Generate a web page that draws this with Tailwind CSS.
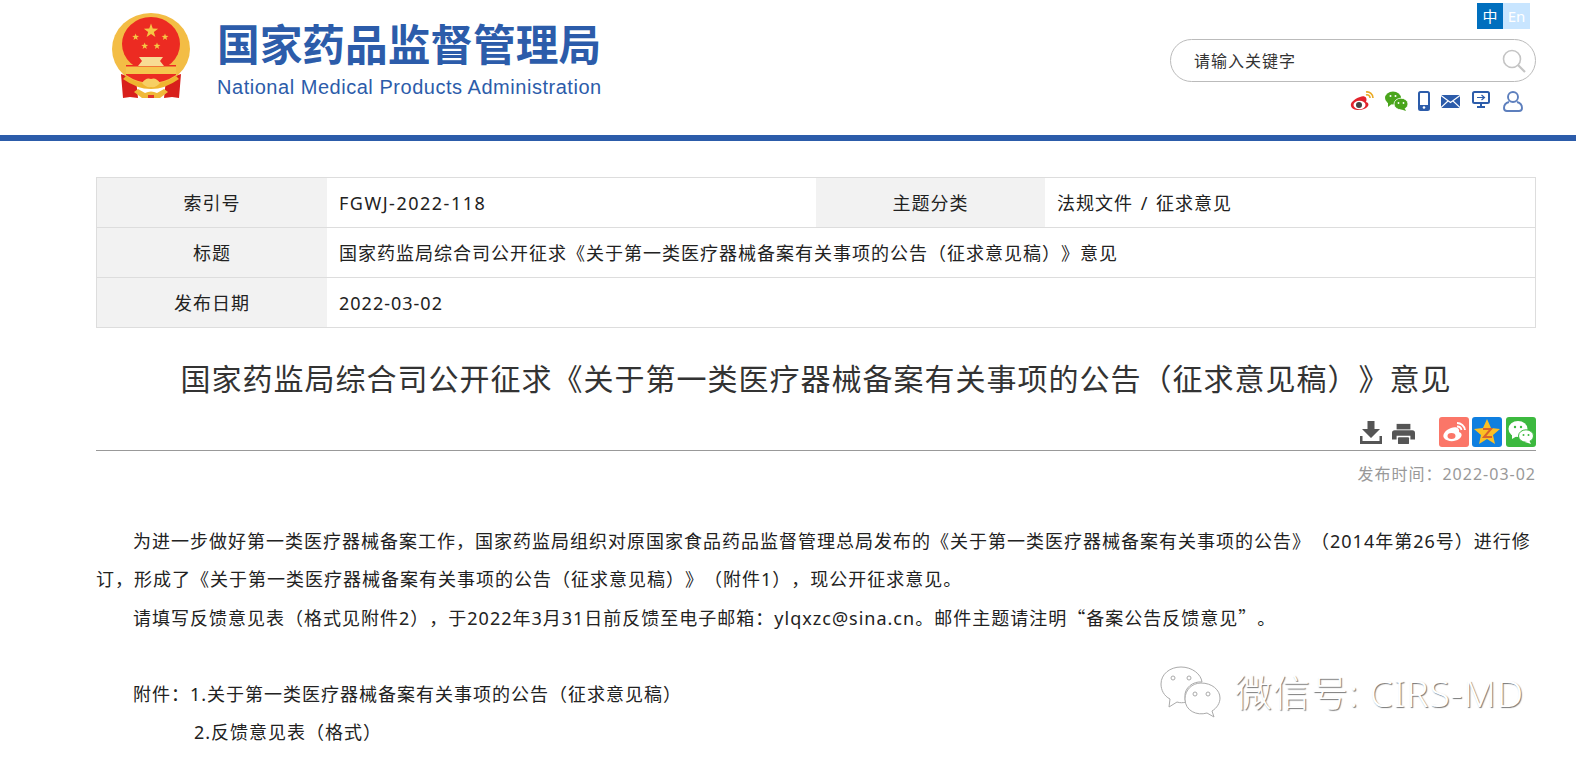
<!DOCTYPE html>
<html lang="zh-CN">
<head>
    <meta charset="UTF-8">
    <meta name="viewport" content="width=device-width, initial-scale=1.0">
    <title>国家药品监督管理局</title>
    <script src="https://cdn.jsdelivr.net/npm/@tailwindcss/browser@4"></script>
</head>
<body class="relative h-[765px] overflow-hidden bg-white font-['Noto_Sans','Noto_Sans_CJK_SC',sans-serif] tracking-[1px] text-[#333] [text-spacing-trim:space-all]">
    <!-- header -->
    <header class="flex h-[135px] justify-between">
        <div class="flex pl-[100px] pt-[5px]">
            <svg class="h-[100px] w-[100px]" viewBox="0 0 100 100">
                <defs>
                    <polygon id="star" points="0,-10 2.35,-3.24 9.51,-3.09 3.8,1.24 5.88,8.09 0,4 -5.88,8.09 -3.8,1.24 -9.51,-3.09 -2.35,-3.24"/>
                </defs>
                <path d="M21 69 L36 74 L38 93 L30 92 L23 93 Z" fill="#d8201c"/>
                <path d="M81 69 L66 74 L64 93 L72 92 L79 93 Z" fill="#d8201c"/>
                <ellipse cx="51" cy="44" rx="39" ry="36" fill="#f3bd45"/>
                <ellipse cx="51" cy="39" rx="29" ry="27" fill="#ec2b22"/>
                <path d="M26 60 H76 V70 Q64 78 51 78 Q38 78 26 70 Z" fill="#ec2b22"/>
                <path d="M42 56 L39 52 H63 L60 56 L64 61 H38 Z" fill="#f8dc94"/>
                <rect x="26" y="61.5" width="50" height="7.5" fill="#f5c64e"/>
                <path d="M26 71 Q38 79 51 79 Q64 79 76 71 L79 74 Q65 84 51 84 Q37 84 23 74 Z" fill="#efb52f"/>
                <path d="M42 78 Q46 72 51 74 Q56 72 60 78 Q56 83 51 82 Q46 83 42 78 Z" fill="#f7cf63"/>
                <path d="M38 84 L45 88 Q51 85 57 88 L64 84 L68 87 L60 93 H42 L34 87 Z" fill="#f0b93a"/>
                <path d="M48 90 H54 V93 H48 Z" fill="#e0342a"/>
                <g fill="#f6c744">
                    <use href="#star" transform="translate(51 26) scale(.75)"/>
                    <use href="#star" transform="translate(35.6 32) scale(.36)"/>
                    <use href="#star" transform="translate(65 32) scale(.36)"/>
                    <use href="#star" transform="translate(44.7 41) scale(.36)"/>
                    <use href="#star" transform="translate(57 41) scale(.36)"/>
                </g>
            </svg>
            <div class="ml-[17px] w-[384px] pt-[17px] tracking-normal text-[#2c5caa]">
                <div class="h-[53px] whitespace-nowrap text-[42.7px] leading-[46px] font-bold">国家药品监督管理局</div>
                <div class="whitespace-nowrap font-['Liberation_Sans',sans-serif] text-[20px] leading-[24px] tracking-[0.53px]">National Medical Products Administration</div>
            </div>
        </div>

        <div class="mr-[40px] w-[366px] pt-[3px]">
            <div class="flex justify-end pr-[6px] text-[15px] leading-[26px] tracking-normal text-white">
                <span class="h-[26px] w-[26px] bg-[#006fbe] text-center">中</span>
                <span class="h-[26px] w-[27px] bg-[#c8e5ff] text-center">En</span>
            </div>
            <div class="mt-[10px] flex h-[43px] items-center justify-between rounded-full border border-[#bbb] pr-[9px] pl-[23px] text-[16px]">
                <span>请输入关键字</span>
                <svg class="h-[24px] w-[24px]" viewBox="0 0 24 24" fill="none" stroke="#c4c4c4">
                    <circle cx="10" cy="10" r="8.5" stroke-width="1.6"/>
                    <path d="M16 16 L23 23" stroke-width="2.2"/>
                </svg>
            </div>
            <div class="mt-[9px] flex items-start justify-end pr-[13px]">
                <svg class="h-[20px] w-[24px]" viewBox="0 0 24 20">
                    <path d="M10 6 C4 8 0 12 1 15 C2 19 9 20 14 18 C19 16 20 12 16 11 C18 6 14 4 10 6 Z" fill="#e2232c"/>
                    <ellipse cx="9.5" cy="14" rx="6" ry="4.2" fill="#fff"/>
                    <circle cx="9" cy="14" r="3" fill="#444"/>
                    <path d="M16 1 A6 6 0 0 1 23 7 M16 4 A3 3 0 0 1 20 7" fill="none" stroke="#e9a921" stroke-width="1.6"/>
                </svg>
                <svg class="ml-[11px] h-[20px] w-[23px]" viewBox="0 0 23 20" fill="#4aa51c">
                    <ellipse cx="8" cy="7" rx="8" ry="6.5"/>
                    <path d="M3 10 L3 16 L8 12 Z"/>
                    <ellipse cx="16" cy="13" rx="7" ry="5.8" stroke="#fff" stroke-width=".8"/>
                    <path d="M19 16 L21 20 L15 18 Z"/>
                    <g fill="#fff"><circle cx="5.5" cy="5" r="1"/><circle cx="10.5" cy="5" r="1"/><circle cx="13.5" cy="12" r=".9"/><circle cx="18.5" cy="12" r=".9"/></g>
                </svg>
                <svg class="ml-[10px] h-[20px] w-[12px]" viewBox="0 0 12 20">
                    <rect x="1" y="1" width="10" height="18" rx="1.5" fill="none" stroke="#2c5caa" stroke-width="2"/>
                    <rect x="1" y="14" width="10" height="5" fill="#2c5caa"/>
                    <circle cx="6" cy="16.5" r="1.3" fill="#fff"/>
                </svg>
                <svg class="mt-[4px] ml-[11px] h-[13px] w-[19px]" viewBox="0 0 19 13">
                    <rect width="19" height="13" rx="1" fill="#2c5caa"/>
                    <path d="M0 .5 L9.5 7.5 L19 .5 M0 12.5 L7 6 M19 12.5 L12 6" fill="none" stroke="#fff" stroke-width="1.1"/>
                </svg>
                <svg class="ml-[12px] h-[18px] w-[18px]" viewBox="0 0 18 18">
                    <rect x="1" y="1" width="16" height="11" rx="1.5" fill="#fff" stroke="#2c5caa" stroke-width="2"/>
                    <path d="M5 6.5 H12 M9.5 4 L12.5 6.5 L9.5 9" fill="none" stroke="#2c5caa" stroke-width="1.2"/>
                    <path d="M8 13 H10 V15 H13 V17 H5 V15 H8 Z" fill="#2c5caa"/>
                </svg>
                <svg class="ml-[13px] h-[21px] w-[20px]" viewBox="0 0 20 21" fill="none" stroke="#5d7fbd" stroke-width="1.9">
                    <circle cx="10" cy="6" r="5"/>
                    <path d="M6 11 C2 12 1 15 1 17 C1 19 2 20 4 20 H16 C18 20 19 19 19 17 C19 15 18 12 14 11"/>
                </svg>
            </div>
        </div>
    </header>
    <div class="h-[6px] bg-[#2c5caa]"></div>

    <main class="ml-[96px] w-[1440px] pt-[36px]">
        <!-- info table -->
        <div class="grid grid-cols-[230px_489px_229px_1fr] border-t border-l border-[#ddd] text-[18px] text-[#222]">
            <div class="flex h-[50px] items-center justify-center border-b border-[#ddd] bg-[#f2f2f2] pt-[2px]">索引号</div>
            <div class="flex h-[50px] items-center border-b border-[#ddd] pt-[2px] pl-[12px] tracking-[1.5px]">FGWJ-2022-118</div>
            <div class="flex h-[50px] items-center justify-center border-b border-[#ddd] bg-[#f2f2f2] pt-[2px]">主题分类</div>
            <div class="flex h-[50px] items-center border-r border-b border-[#ddd] pt-[2px] pl-[12px] [word-spacing:2px]">法规文件 / 征求意见</div>

            <div class="flex h-[50px] items-center justify-center border-b border-[#ddd] bg-[#f2f2f2] pt-[2px]">标题</div>
            <div class="col-span-3 flex h-[50px] items-center border-r border-b border-[#ddd] pt-[2px] pl-[12px]">国家药监局综合司公开征求《关于第一类医疗器械备案有关事项的公告（征求意见稿）》意见</div>

            <div class="flex h-[50px] items-center justify-center border-b border-[#ddd] bg-[#f2f2f2] pt-[2px]">发布日期</div>
            <div class="col-span-3 flex h-[50px] items-center border-r border-b border-[#ddd] pt-[2px] pl-[12px]">2022-03-02</div>
        </div>

        <h1 class="mt-[26px] h-[50px] text-center text-[30px] leading-[50px]">国家药监局综合司公开征求《关于第一类医疗器械备案有关事项的公告（征求意见稿）》意见</h1>

        <!-- share row -->
        <div class="flex h-[47px] items-start justify-end border-b border-[#999] pt-[13px]">
            <svg class="mt-[4px] h-[23px] w-[22px]" viewBox="0 0 22 23" fill="#555">
                <path d="M7.5 0 H14.5 V8 H20 L11 17 L2 8 H7.5 Z"/>
                <path d="M0 15 H2.5 V20 H19.5 V15 H22 V23 H0 Z"/>
            </svg>
            <svg class="mt-[6px] ml-[10px] h-[22px] w-[23px]" viewBox="0 0 25 22" fill="#555">
                <path d="M5 0 H20 V6 H5 Z"/>
                <path d="M3 7 H22 C24 7 25 8 25 10 V17 H20 V13 H5 V17 H0 V10 C0 8 1 7 3 7 Z"/>
                <rect x="6.5" y="14.5" width="12" height="7.5" rx="1"/>
            </svg>
            <svg class="ml-[24px] h-[30px] w-[30px]" viewBox="0 0 30 30">
                <rect width="30" height="30" rx="3" fill="#fb7668"/>
                <path d="M12 11 C6 13 3 18 5 21 C8 25 16 25 20 22 C24 19 23 16 20 15 C21 11 17 9 12 11 Z" fill="#fff"/>
                <ellipse cx="12.5" cy="19" rx="4" ry="3" fill="#fb7668"/>
                <path d="M18 6 A8 8 0 0 1 26 13 M18 9.5 A4.5 4.5 0 0 1 22.5 13" fill="none" stroke="#fff" stroke-width="1.8"/>
            </svg>
            <svg class="ml-[3px] h-[30px] w-[30px]" viewBox="0 0 30 30">
                <rect width="30" height="30" rx="3" fill="#0f7fe0"/>
                <polygon points="15,2 19,11 28,12 21,18 23,27 15,22 7,27 9,18 2,12 11,11" fill="#fbbf24"/>
                <path d="M11 12 H19 L12 20 H20" fill="none" stroke="#d9622b" stroke-width="2"/>
            </svg>
            <svg class="ml-[4px] h-[30px] w-[30px]" viewBox="0 0 30 30">
                <rect width="30" height="30" rx="3" fill="#3cb93f"/>
                <ellipse cx="12" cy="12" rx="9.5" ry="8" fill="#fff"/>
                <path d="M6 17 L6 22 L11 19 Z" fill="#fff"/>
                <ellipse cx="20" cy="19" rx="7.5" ry="6.2" fill="#fff" stroke="#3cb93f"/>
                <path d="M23 23 L25 27 L19 25 Z" fill="#fff"/>
                <g fill="#3cb93f"><circle cx="9" cy="10" r="1.2"/><circle cx="15" cy="10" r="1.2"/><circle cx="17.5" cy="18" r="1"/><circle cx="22.5" cy="18" r="1"/></g>
            </svg>
        </div>
        <div class="mt-[8px] text-right text-[16px] leading-[30px] text-[#999]">发布时间：2022-03-02</div>

        <!-- article -->
        <div class="mt-[33px] text-[18px] leading-[38px] text-[#222]">
            <p class="indent-[37px]">为进一步做好第一类医疗器械备案工作，国家药监局组织对原国家食品药品监督管理总局发布的《关于第一类医疗器械备案有关事项的公告》（2014年第26号）进行修订，形成了《关于第一类医疗器械备案有关事项的公告（征求意见稿）》（附件1），现公开征求意见。</p>
            <p class="indent-[37px]">请填写反馈意见表（格式见附件2），于2022年3月31日前反馈至电子邮箱：ylqxzc@sina.cn。邮件主题请注明<span class="font-['Noto_Sans_CJK_SC',sans-serif]">“</span>备案公告反馈意见<span class="font-['Noto_Sans_CJK_SC',sans-serif]">”</span>。</p>
            <p class="mt-[38px] indent-[37px]">附件：1.关于第一类医疗器械备案有关事项的公告（征求意见稿）</p>
            <p class="pl-[98px]">2.反馈意见表（格式）</p>
        </div>
    </main>

    <!-- watermark -->
    <div class="absolute top-[665px] left-[1160px] flex items-center">
        <svg class="h-[54px] w-[62px]" viewBox="0 0 62 54" fill="#fff" stroke="#aaa" stroke-width="1">
            <path d="M21 1 C32 1 41 8 42 16 C33 15 24 22 25 31 C25 33 25 35 26 36 C23 37 20 37 17 36 L9 41 L10 33 C4 30 1 24 1 18 C1 8 10 1 21 1 Z"/>
            <path d="M41 17 C52 17 60 24 60 32 C60 37 57 42 52 45 L54 51 L47 47 C37 50 25 45 25 33 C25 24 32 17 41 17 Z"/>
            <circle cx="13" cy="12" r="2"/><circle cx="29" cy="12" r="2"/><circle cx="35" cy="28" r="2"/><circle cx="48" cy="28" r="2"/>
        </svg>
        <span class="ml-[13px] whitespace-nowrap text-[37px] font-light text-white [text-shadow:1px_1px_1px_#777]">微信号: CIRS-MD</span>
    </div>
</body>
</html>
